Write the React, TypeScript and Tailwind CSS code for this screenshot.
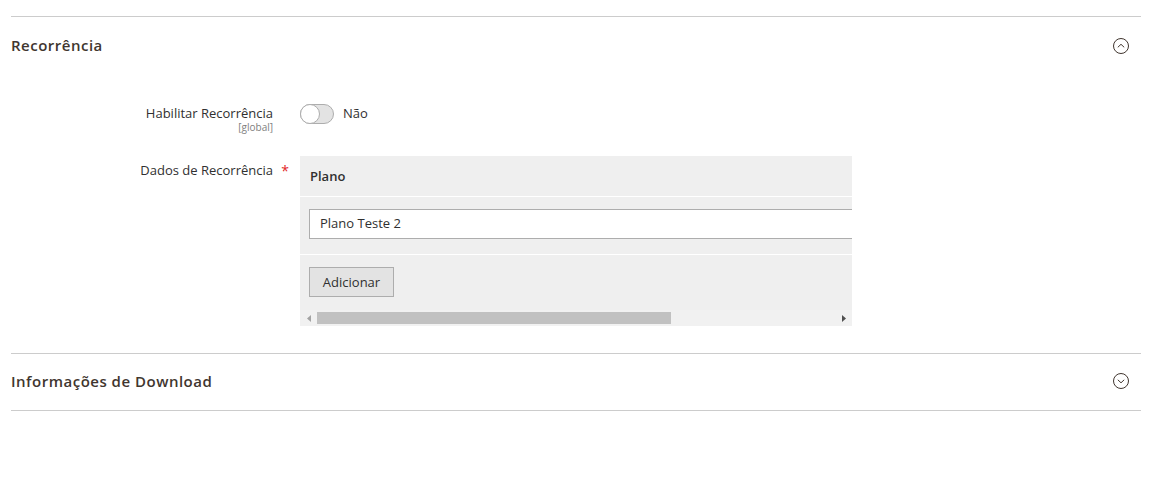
import React from "react";

function CircleChevron({ up }: { up: boolean }) {
  return (
    <svg width="18" height="18" viewBox="0 0 18 18" fill="none">
      <circle cx="9" cy="9" r="7.5" stroke="#41362f" strokeWidth="1" />
      {up ? (
        <path d="M5.8 10.3 L9 7.3 L12.2 10.3" stroke="#41362f" strokeWidth="1" />
      ) : (
        <path d="M5.8 7.8 L9 10.8 L12.2 7.8" stroke="#41362f" strokeWidth="1" />
      )}
    </svg>
  );
}

export default function App() {
  return (
    <div
      className="w-[1161px] h-[477px] bg-white pl-[11px] pr-[20px] pt-[16px] text-[#303030]"
      style={{ fontFamily: '"Open Sans", "Noto Sans", sans-serif' }}
    >
      <div className="border-t border-[#cccccc]">
        <div className="h-[57px] flex items-center justify-between">
          <span className="text-[15px] font-semibold tracking-[0.5px] text-[#41362f]">Recorrência</span>
          <div className="mr-[11px] mt-[1px]">
            <CircleChevron up />
          </div>
        </div>
        <div className="pt-[30px]">
          <div className="flex h-[52px]">
            <div className="w-[262px] flex flex-col items-end">
              <span className="text-[13px] font-medium leading-[20px] mt-[-1px]">Habilitar Recorrência</span>
              <span className="text-[10px] leading-[10px] text-[#808080] mt-[-1px]">[global]</span>
            </div>
            <div className="ml-[27px] flex items-start gap-[9px]">
              <div className="relative w-[34px] h-[20px] rounded-full bg-[#e3e3e3] border border-[#adadad]">
                <div className="absolute left-[-1px] top-[-1px] w-[20px] h-[20px] rounded-full bg-white border border-[#adadad]" />
              </div>
              <span className="text-[13px] leading-[19px] text-[#303030]">Não</span>
            </div>
          </div>
          <div className="flex">
            <div className="w-[262px] flex justify-end pt-[4px]">
              <span className="relative text-[13px] font-medium leading-[20px]">
                Dados de Recorrência
                <span className="absolute right-[-16px] top-[1px] text-[#e22626] font-normal text-[14px]">*</span>
              </span>
            </div>
            <div className="ml-[27px] w-[552px] bg-[#efefef] overflow-hidden">
              <div className="h-[40px] flex items-center pl-[10px] pt-[2px] text-[13px] font-semibold text-[#303030]">
                Plano
              </div>
              <div className="h-[1px] bg-white" />
              <div className="pl-[9px] pt-[12px] pb-[15px]">
                <div className="w-[600px] h-[30px] bg-white border border-[#adadad] flex items-center pl-[10px] text-[13px] text-[#303030]">
                  Plano Teste 2
                </div>
              </div>
              <div className="h-[1px] bg-white" />
              <div className="pl-[9px] pt-[12px] pb-[13px]">
                <button className="w-[85px] h-[30px] bg-[#e3e3e3] border border-[#adadad] text-[13px] text-[#303030] pt-[2px]">
                  Adicionar
                </button>
              </div>
              <div className="h-[16px] bg-[#f1f1f1] flex items-center">
                <div className="w-[17px] h-[16px] flex items-center justify-center">
                  <svg width="4" height="7" viewBox="0 0 4 7">
                    <path d="M4 0 L0 3.5 L4 7 Z" fill="#a3a3a3" />
                  </svg>
                </div>
                <div className="w-[354px] h-[12px] bg-[#c1c1c1]" />
                <div className="flex-1" />
                <div className="w-[17px] h-[16px] flex items-center justify-center">
                  <svg width="4" height="7" viewBox="0 0 4 7">
                    <path d="M0 0 L4 3.5 L0 7 Z" fill="#505050" />
                  </svg>
                </div>
              </div>
            </div>
          </div>
        </div>
        <div className="h-[27px]" />
      </div>
      <div className="border-t border-b border-[#cccccc]">
        <div className="h-[56px] flex items-center justify-between pb-[2px]">
          <span className="text-[15px] font-semibold tracking-[0.5px] text-[#41362f]">Informações de Download</span>
          <div className="mr-[11px]">
            <CircleChevron up={false} />
          </div>
        </div>
      </div>
    </div>
  );
}
